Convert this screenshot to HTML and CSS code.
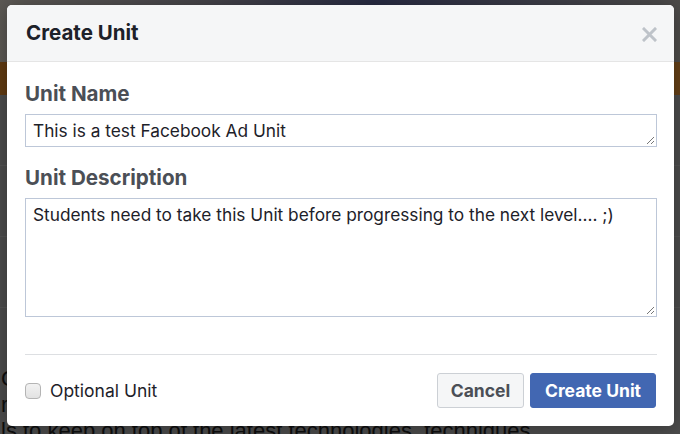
FILE: index.html
```html
<!DOCTYPE html>
<html lang="en">
<head>
<meta charset="utf-8">
<title>Create Unit</title>
<link rel="stylesheet" href="styles.css">
</head>
<body>
<div class="page">
  <div class="hero"></div>
  <div class="band"></div>
  <div class="rows">
    <div class="row"></div>
    <div class="row"></div>
    <div class="row"></div>
  </div>
  <div class="copy">
    <p class="line">C</p>
    <p class="line">r</p>
    <p class="line">ls to keep on top of the latest technologies, techniques</p>
  </div>
</div>
<div class="overlay"></div>
<div class="modal">
  <div class="modal-header">
    <h1 class="modal-title">Create Unit</h1>
    <span class="close">
      <svg width="15" height="15" viewBox="0 0 15 15"><path d="M2 2L13 13M13 2L2 13" stroke="#bec3c9" stroke-width="3" stroke-linecap="square"/></svg>
    </span>
  </div>
  <div class="modal-body">
    <label class="field-label">Unit Name</label>
    <div class="input">This is a test Facebook Ad Unit<span class="grip"></span></div>
    <label class="field-label second">Unit Description</label>
    <div class="textarea">Students need to take this Unit before progressing to the next level.... ;)<span class="grip"></span></div>
    <div class="divider"></div>
    <div class="footer">
      <label class="check"><span class="box"></span>Optional Unit</label>
      <div class="actions">
        <span class="btn cancel">Cancel</span>
        <span class="btn primary">Create Unit</span>
      </div>
    </div>
  </div>
</div>
</body>
</html>
```
FILE: styles.css
```css
html, body {
  margin: 0;
  padding: 0;
}
body {
  width: 680px;
  height: 434px;
  overflow: hidden;
  position: relative;
  background: #8a8a8a;
  font-family: Inter, "Helvetica Neue", Arial, sans-serif;
}
.page {
  height: 434px;
  display: flex;
  flex-direction: column;
}
.hero {
  height: 62px;
  background: linear-gradient(90deg, #a8a29a 0%, #7f7c86 30%, #4a4f7a 55%, #8d8a88 100%);
}
.band {
  height: 33px;
  background: linear-gradient(90deg, #b06a20 0%, #8a5220 50%, #b8762a 100%);
}
.rows {
  flex: 1;
  display: flex;
  flex-direction: column;
}
.row {
  height: 70px;
  border-bottom: 1px solid #9a9a9a;
}
.copy {
  padding: 0 0 0 1px;
  margin-bottom: -10px;
}
.line {
  margin: 0;
  font-family: "Helvetica Neue", "Liberation Sans", Arial, sans-serif;
  font-size: 22px;
  line-height: 26px;
  color: #1a1a1a;
  white-space: nowrap;
}
.overlay {
  position: absolute;
  inset: 0;
  background: rgba(0, 0, 0, 0.45);
}
.modal {
  position: absolute;
  left: 7px;
  top: 5px;
  width: 667px;
  height: 421px;
  background: #fff;
  border-radius: 5px;
  overflow: hidden;
  box-shadow: 0 2px 20px rgba(0, 0, 0, 0.3);
}
.modal-header {
  height: 57px;
  box-sizing: border-box;
  background: #f5f6f7;
  border-bottom: 1px solid #e5e5e5;
  display: flex;
  align-items: center;
  justify-content: space-between;
  padding: 0 17px 0 19px;
}
.modal-title {
  margin: 0;
  font-size: 20.5px;
  font-weight: 700;
  color: #1d2129;
  line-height: 24px;
}
.close {
  display: flex;
  width: 15px;
  height: 15px;
  margin-top: 2px;
}
.modal-body {
  padding: 19px 17px 18px 18px;
}
.field-label {
  display: block;
  font-size: 20.6px;
  font-weight: 700;
  line-height: 26px;
  color: #4b4f56;
  margin-bottom: 7px;
}
.field-label.second {
  margin-top: 18px;
  margin-bottom: 7px;
}
.input, .textarea {
  position: relative;
  box-sizing: border-box;
  border: 1px solid #bdc7d8;
  font-size: 17.3px;
  color: #1d2129;
  padding: 0 7px;
}
.input {
  height: 33px;
  line-height: 31px;
}
.textarea {
  height: 119px;
  padding-top: 5px;
  line-height: 22px;
}
.grip {
  position: absolute;
  right: 2px;
  bottom: 2px;
  width: 7px;
  height: 7px;
  background: linear-gradient(135deg, transparent 45%, #777 45%, #777 55%, transparent 55%, transparent 72%, #777 72%, #777 82%, transparent 82%);
}
.divider {
  height: 1px;
  background: #dddfe2;
  margin-top: 37px;
}
.footer {
  display: flex;
  align-items: center;
  justify-content: space-between;
  margin-top: 18px;
}
.check {
  display: flex;
  align-items: center;
  font-size: 17.5px;
  color: #1d2129;
}
.box {
  width: 16px;
  height: 16px;
  box-sizing: border-box;
  border: 1px solid #b4b4b4;
  border-radius: 4px;
  background: linear-gradient(#f2f2f2, #e2e2e2);
  margin-right: 9px;
}
.actions {
  display: flex;
  gap: 6px;
  margin-right: 1px;
}
.btn {
  box-sizing: border-box;
  height: 35px;
  border-radius: 3px;
  font-size: 17.5px;
  font-weight: 700;
  line-height: 33px;
  text-align: center;
}
.cancel {
  width: 87px;
  background: #f5f6f7;
  border: 1px solid #ccd0d5;
  color: #4b4f56;
}
.primary {
  width: 126px;
  background: #4267b2;
  border: 1px solid #4267b2;
  color: #fff;
}
```
